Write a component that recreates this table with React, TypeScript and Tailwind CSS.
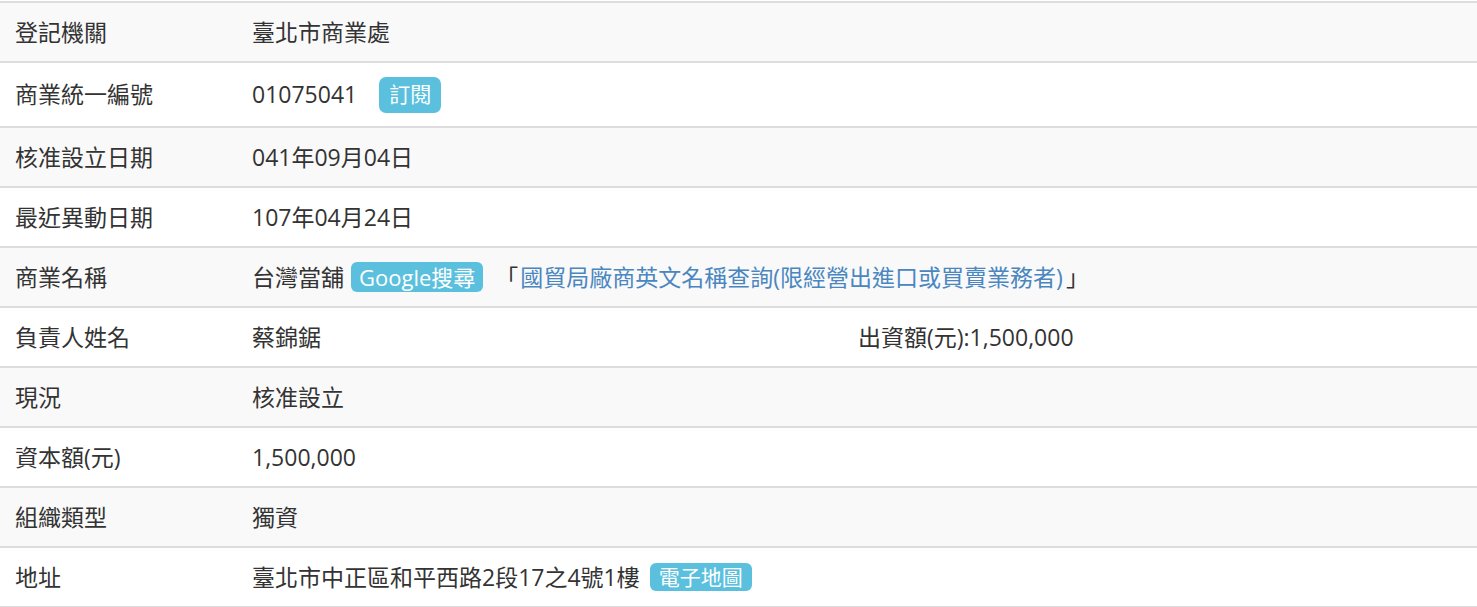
import React from "react";

const font = { fontFamily: '"Open Sans", "Noto Sans CJK TC", sans-serif' };

function Row({ label, children, odd, h = "h-[60px]" }: { label: string; children: React.ReactNode; odd: boolean; h?: string }) {
  return (
    <div className={`flex items-center border-t-2 border-[#dddddd] ${h} ${odd ? "bg-[#f9f9f9]" : "bg-white"}`}>
      <div className="w-[237px] shrink-0 pl-[15px]">{label}</div>
      <div className="flex flex-1 items-center pl-[15px]">{children}</div>
    </div>
  );
}

export default function App() {
  return (
    <div className="w-[1477px] h-[607px] overflow-hidden bg-white pt-px text-[23px] leading-none text-[#333333]" style={font}>
      <div className="border-b-2 border-[#dddddd]">
        <Row label="登記機關" odd>臺北市商業處</Row>
        <Row label="商業統一編號" odd={false} h="h-[65px]">
          <span>01075041</span>
          <span className="ml-[22px] flex h-[36px] items-center rounded-[7px] bg-[#5bc0de] px-[10px] text-[21px] text-white">訂閱</span>
        </Row>
        <Row label="核准設立日期" odd>041年09月04日</Row>
        <Row label="最近異動日期" odd={false}>107年04月24日</Row>
        <Row label="商業名稱" odd>
          <span>台灣當舖</span>
          <span className="ml-[7px] flex h-[30px] items-center rounded-[6px] bg-[#5bc0de] px-[8px] text-[22px] text-white">Google搜尋</span>
          <span className="ml-[12px]">「</span>
          <span className="ml-[2px] text-[#4a86c0]">國貿局廠商英文名稱查詢(限經營出進口或買賣業務者)</span>
          <span className="ml-[3px]">」</span>
        </Row>
        <Row label="負責人姓名" odd={false}>
          <span className="w-[606px]">蔡錦鋸</span>
          <span>出資額(元):1,500,000</span>
        </Row>
        <Row label="現況" odd>核准設立</Row>
        <Row label="資本額(元)" odd={false}>1,500,000</Row>
        <Row label="組織類型" odd>獨資</Row>
        <Row label="地址" odd={false}>
          <span>臺北市中正區和平西路2段17之4號1樓</span>
          <span className="ml-[10px] flex h-[28px] items-center rounded-[6px] bg-[#5bc0de] px-[9px] text-[21px] text-white">電子地圖</span>
        </Row>
      </div>
    </div>
  );
}
